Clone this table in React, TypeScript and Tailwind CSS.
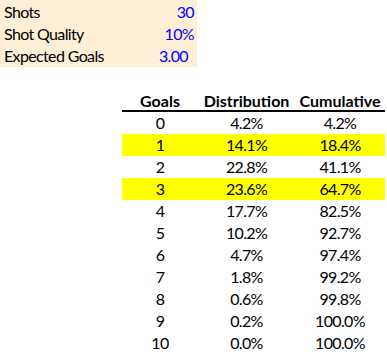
const rows: [number, string, string][] = [
  [0, "4.2%", "4.2%"],
  [1, "14.1%", "18.4%"],
  [2, "22.8%", "41.1%"],
  [3, "23.6%", "64.7%"],
  [4, "17.7%", "82.5%"],
  [5, "10.2%", "92.7%"],
  [6, "4.7%", "97.4%"],
  [7, "1.8%", "99.2%"],
  [8, "0.6%", "99.8%"],
  [9, "0.2%", "100.0%"],
  [10, "0.0%", "100.0%"],
];

const inputs = [
  ["Shots", "30", "pr-[3px]"],
  ["Shot Quality", "10%", "pr-[3px]"],
  ["Expected Goals", "3.00", "pr-[9px]"],
];

export default function App() {
  return (
    <div className="w-[387px] h-[354px] bg-white text-black text-[16px] leading-none tracking-[-0.04em]" style={{ fontFamily: '"Lato", "Liberation Sans", sans-serif' }}>
      <div className="w-[197px] h-[67px] bg-[#fdefd6] flex flex-col pt-[1px]">
        {inputs.map(([label, value, pad]) => (
          <div key={label} className="h-[22px] flex items-center justify-between pl-[4px]">
            <span>{label}</span>
            <span className={`text-[#0000ff] ${pad}`}>{value}</span>
          </div>
        ))}
      </div>

      <div className="ml-[122px] mt-[24px] w-[263px]">
        <div className="flex h-[21px] items-center font-bold tracking-normal border-b-2 border-black">
          <div className="w-[76px] text-center">Goals</div>
          <div className="w-[97px] text-center">Distribution</div>
          <div className="flex-1 text-center">Cumulative</div>
        </div>
        {rows.map(([g, d, c]) => (
          <div key={g} className={`flex h-[22px] items-center ${g === 1 || g === 3 ? "bg-[#ffff00]" : ""}`}>
            <div className="w-[76px] text-center">{g}</div>
            <div className="w-[97px] text-center">{d}</div>
            <div className="flex-1 text-center">{c}</div>
          </div>
        ))}
      </div>
    </div>
  );
}
